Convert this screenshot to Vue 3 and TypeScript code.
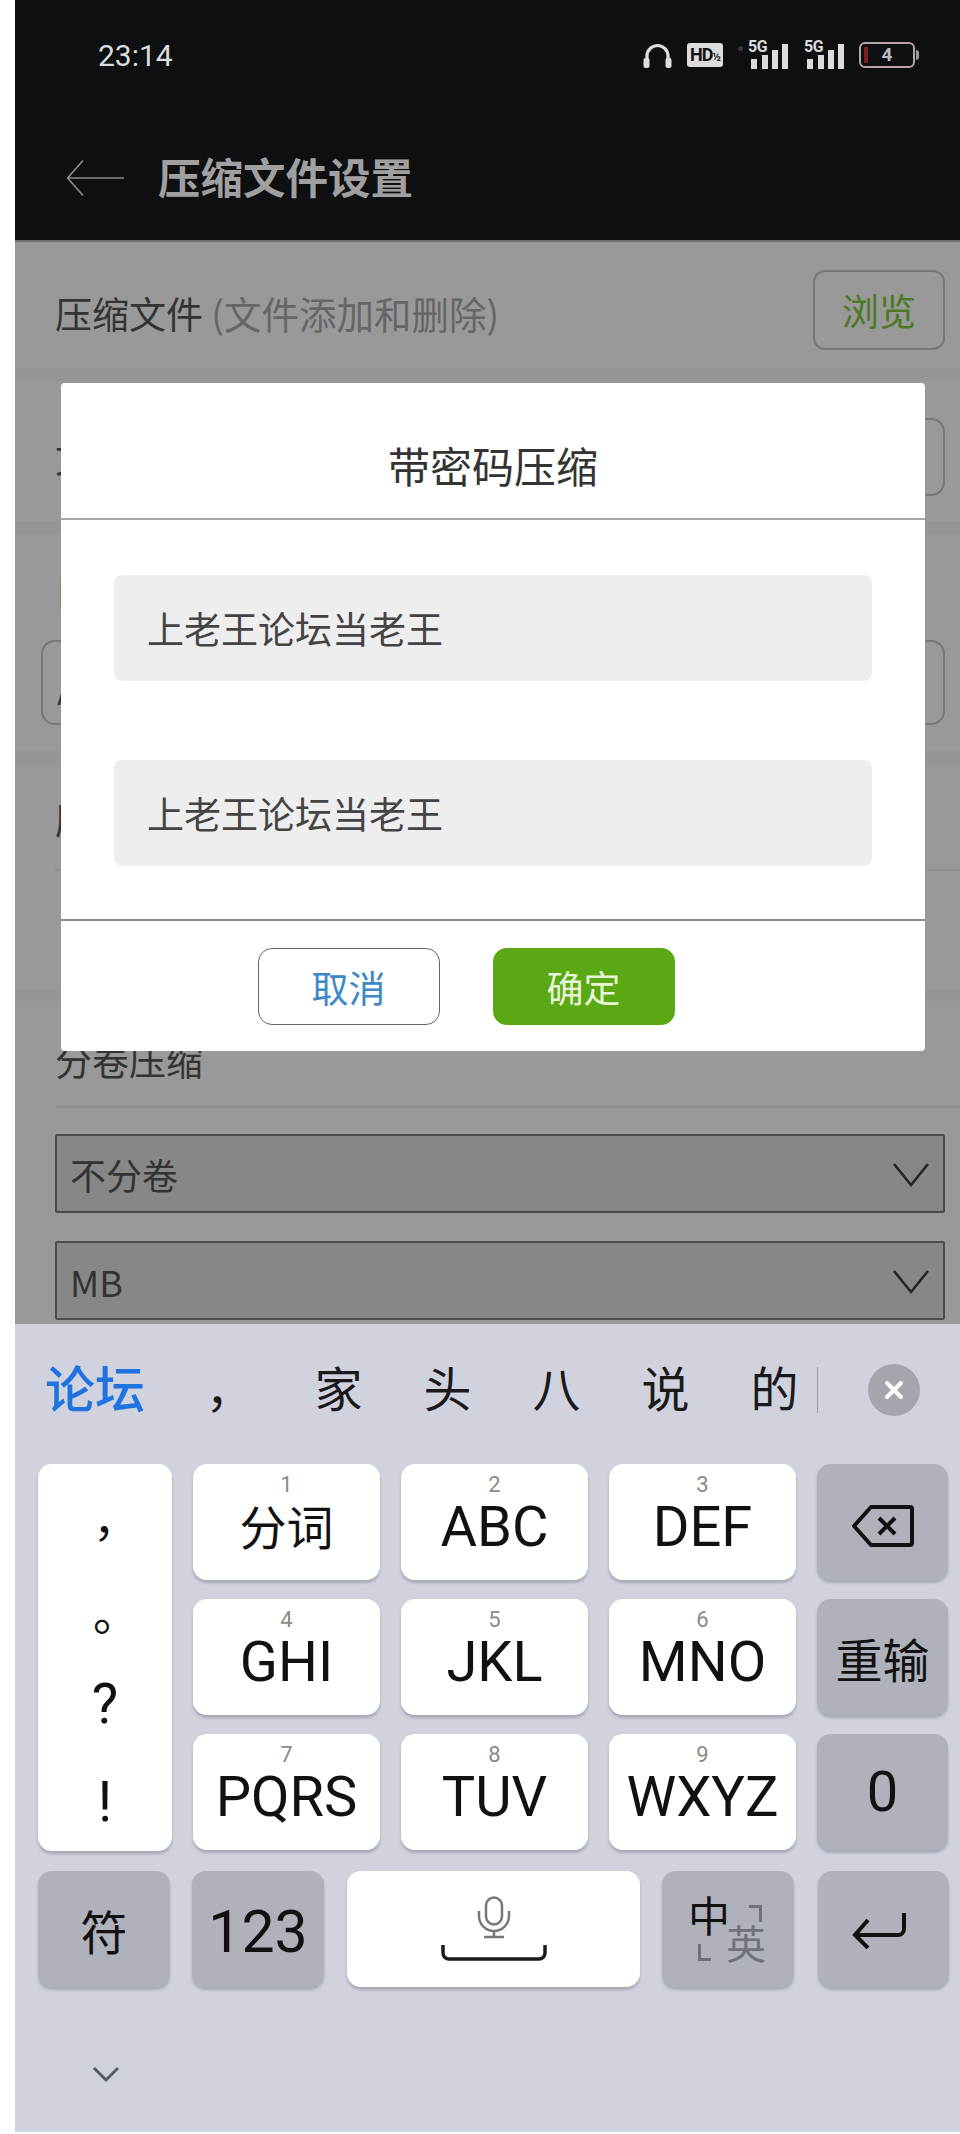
<template>
  <div class="screen">
    <header class="topbar">
      <div class="statusbar">
        <span class="time">23:14</span>
        <div class="status-icons">
          <svg class="ic-head" width="29" height="26" viewBox="0 0 29 26">
            <path d="M4 22V14a10.500 10.500 0 0 1 21 0v8" fill="none" stroke="#dedede" stroke-width="3.200" />
            <rect x="0.500" y="16" width="6" height="10" rx="2" fill="#dedede" />
            <rect x="22.500" y="16" width="6" height="10" rx="2" fill="#dedede" />
          </svg>
          <span class="hd">HD<small>½</small></span>
          <span class="dot"></span>
          <div class="signal" v-for="n in 2" :key="n">
            <span class="five-g">5G</span>
            <svg width="38" height="26" viewBox="0 0 38 26">
              <rect x="0" y="16" width="6" height="10" fill="#dcdcdc" />
              <rect x="11" y="12" width="6" height="14" fill="#dcdcdc" />
              <rect x="21" y="7" width="6" height="19" fill="#dcdcdc" />
              <rect x="31" y="1" width="6" height="25" fill="#dcdcdc" />
            </svg>
          </div>
          <div class="battery">
            <i class="battery-low"></i>
            <span>4</span>
          </div>
        </div>
      </div>
      <div class="titlebar">
        <svg class="back" width="60" height="38" viewBox="0 0 60 38">
          <path d="M17 1.500 1.500 19 17 36.500M2 19h56" fill="none" stroke="#8c8c8c" stroke-width="1.600" />
        </svg>
        <h1>压缩文件设置</h1>
      </div>
    </header>

    <main class="settings">
      <section class="row row-files">
        <span class="label">压缩文件 <em>(文件添加和删除)</em></span>
        <button class="browse">浏览</button>
      </section>
      <section class="row row-name">
        <span class="label">文件名</span>
        <div class="field"></div>
      </section>
      <section class="row row-path">
        <span class="label">目标路径</span>
        <div class="field wide">/storage</div>
      </section>
      <section class="row row-mode">
        <span class="label">压缩方式</span>
        <div class="rule"></div>
      </section>
      <section class="row row-volume">
        <span class="label">分卷压缩</span>
        <div class="rule"></div>
        <div class="select" v-for="opt in volumeOptions" :key="opt">
          <span>{{ opt }}</span>
          <svg width="38" height="38" viewBox="0 0 38 38">
            <path d="M2 9 19 30 36 9" fill="none" stroke="#262626" stroke-width="2.600" />
          </svg>
        </div>
      </section>
    </main>

    <section class="keyboard">
      <div class="candidates">
        <span class="cand-active">论坛</span>
        <div class="cand-list">
          <span v-for="c in candidates" :key="c">{{ c }}</span>
        </div>
        <i class="cand-sep"></i>
        <span class="cand-close">
          <svg width="24" height="24" viewBox="0 0 24 24">
            <path d="M5 5 19 19M19 5 5 19" stroke="#fff" stroke-width="4" stroke-linecap="round" />
          </svg>
        </span>
      </div>

      <div class="keys">
        <div class="punct">
          <span class="wide-mark">，</span>
          <span class="wide-mark">。</span>
          <span>?</span>
          <span>!</span>
        </div>
        <div class="t9">
          <div class="key" v-for="k in t9Keys" :key="k.num">
            <small>{{ k.num }}</small>
            <span :class="{ cjk: k.num === 1 }">{{ k.text }}</span>
          </div>
        </div>
        <div class="side">
          <div class="key dark">
            <svg class="backspace" width="64" height="46" viewBox="0 0 64 46">
              <path d="M20 4h39a2 2 0 0 1 2 2v34a2 2 0 0 1-2 2H20L3 23Z" fill="none" stroke="#111" stroke-width="4" stroke-linejoin="round" />
              <path d="M28 15 44 31M44 15 28 31" stroke="#111" stroke-width="4" />
            </svg>
          </div>
          <div class="key dark"><span class="cjk">重输</span></div>
          <div class="key dark"><span>0</span></div>
        </div>
      </div>

      <div class="bottom-row">
        <div class="key dark narrow"><span class="cjk">符</span></div>
        <div class="key dark narrow"><span class="num">123</span></div>
        <div class="key space">
          <svg width="106" height="66" viewBox="0 0 106 66">
            <rect x="45" y="1.500" width="16" height="27" rx="8" fill="none" stroke="#777" stroke-width="2.500" />
            <path d="M38 15v5a15 15 0 0 0 30 0v-5M53 35v6M43 41h20" fill="none" stroke="#777" stroke-width="2.500" />
            <path d="M2 49v8a6 6 0 0 0 6 6h90a6 6 0 0 0 6-6v-8" fill="none" stroke="#1a1a1a" stroke-width="3.500" />
          </svg>
        </div>
        <div class="key dark narrow lang">
          <span class="zh">中</span>
          <span class="en">英</span>
          <i class="corner tr"></i>
          <i class="corner bl"></i>
        </div>
        <div class="key dark narrow">
          <svg class="enter" width="54" height="38" viewBox="0 0 54 38">
            <path d="M52 2v16a6 6 0 0 1-6 6H4M16 9 3 24l13 13" fill="none" stroke="#111" stroke-width="4" />
          </svg>
        </div>
      </div>

      <svg class="collapse" width="28" height="18" viewBox="0 0 28 18">
        <path d="M2 3 14 15 26 3" fill="none" stroke="#555c66" stroke-width="3" />
      </svg>
    </section>

    <!-- 弹窗 -->
    <div class="dialog">
      <h2>带密码压缩</h2>
      <div class="dialog-body">
        <div class="pwd" v-for="n in 2" :key="n">{{ password }}</div>
      </div>
      <div class="dialog-foot">
        <button class="btn cancel">取消</button>
        <button class="btn ok">确定</button>
      </div>
    </div>
  </div>
</template>

<script setup lang="ts">
interface T9Key {
  num: number
  text: string
}

const password = "上老王论坛当老王"
const volumeOptions = ["不分卷", "MB"]
const candidates = ["，", "家", "头", "八", "说", "的"]
const t9Keys: T9Key[] = [
  { num: 1, text: "分词" },
  { num: 2, text: "ABC" },
  { num: 3, text: "DEF" },
  { num: 4, text: "GHI" },
  { num: 5, text: "JKL" },
  { num: 6, text: "MNO" },
  { num: 7, text: "PQRS" },
  { num: 8, text: "TUV" },
  { num: 9, text: "WXYZ" },
]
</script>

<style>
html,
body {
  margin: 0;
  background: #fff;
}
</style>

<style scoped>
.screen {
  position: relative;
  width: 945px;
  height: 2132px;
  margin-left: 15px;
  overflow: hidden;
  display: flex;
  flex-direction: column;
  font-family: "Noto Sans CJK SC", "Noto Sans", sans-serif;
}

/* 顶部 */
.topbar {
  height: 242px;
  flex: none;
  background: #0d0f10;
  border-bottom: 2px solid #6e6e6e;
  box-sizing: border-box;
}
.statusbar {
  height: 110px;
  display: flex;
  align-items: center;
  justify-content: space-between;
  padding: 0 45px 0 83px;
  box-sizing: border-box;
}
.time {
  font: 30px Roboto, sans-serif;
  color: #dcdcdc;
}
.status-icons {
  display: flex;
  align-items: center;
}
.hd {
  width: 36px;
  height: 24px;
  margin-left: 15px;
  background: #dcdcdc;
  color: #111;
  border-radius: 3px;
  font: bold 18px/24px Roboto, sans-serif;
  letter-spacing: -1px;
  text-align: center;
  white-space: nowrap;
  overflow: hidden;
}
.hd small {
  font-size: 11px;
}
.dot {
  width: 5px;
  height: 5px;
  margin: 0 -1px 14px 15px;
  border-radius: 50%;
  background: #3b3b3b;
}
.signal {
  position: relative;
  height: 27px;
  margin: 0 9px;
  display: flex;
  align-items: flex-end;
}
.five-g {
  position: absolute;
  left: -3px;
  top: -3px;
  font: bold 16px/15px Roboto, sans-serif;
  color: #dcdcdc;
  letter-spacing: -0.5px;
  background: #0d0f10;
  padding-right: 1px;
}
.battery {
  position: relative;
  width: 56px;
  height: 26px;
  margin-left: 5px;
  box-sizing: border-box;
  border: 2px solid #b5a6a6;
  border-radius: 6px;
  text-align: center;
  font: bold 19px/22px Roboto, sans-serif;
  color: #bdbdbd;
}
.battery::after {
  content: "";
  position: absolute;
  right: -6px;
  top: 6px;
  width: 3px;
  height: 10px;
  background: #9a9a9a;
  border-radius: 0 3px 3px 0;
}
.battery-low {
  position: absolute;
  left: 3px;
  top: 3px;
  width: 4px;
  height: 16px;
  background: #7d1d22;
}
.titlebar {
  display: flex;
  align-items: center;
  height: 136px;
  padding-left: 51px;
}
.titlebar h1 {
  margin: 0 0 5px 32px;
  font-size: 42.500px;
  font-weight: 700;
  color: #a0a0a0;
}

/* 被遮住的设置页 */
.settings {
  flex: none;
  height: 1082px;
  background: #999;
  color: #333;
  font-size: 37px;
  display: flex;
  flex-direction: column;
}
.row {
  box-sizing: border-box;
  padding: 0 15px 0 40px;
  border-bottom: 13px solid #959595;
}
.row-files {
  height: 139px;
  display: flex;
  align-items: flex-start;
  justify-content: space-between;
  padding-top: 28px;
}
.label {
  line-height: 54px;
}
.row-files .label {
  margin-top: 16px;
}
.label em {
  font-style: normal;
  font-size: 37.500px;
  color: #666;
}
.browse {
  width: 132px;
  height: 80px;
  box-sizing: border-box;
  background: transparent;
  border: 2px solid #777;
  border-radius: 12px;
  color: #4c7a22;
  font: 37px "Noto Sans CJK SC", sans-serif;
}
.row-name {
  height: 153px;
  display: flex;
  align-items: center;
  justify-content: space-between;
  padding-top: 12px;
}
.field {
  width: 600px;
  height: 78px;
  box-sizing: border-box;
  border: 2px solid #777;
  border-radius: 14px;
}
.row-path {
  height: 230px;
  padding-top: 29px;
  padding-left: 26px;
  display: flex;
  flex-direction: column;
}
.row-path .label {
  padding-left: 14px;
}
.field.wide {
  width: 100%;
  height: 85px;
  margin-top: 23px;
  padding-left: 14px;
  line-height: 81px;
}
.row-mode {
  height: 238px;
  padding-top: 28px;
  padding-right: 0;
}
.row-mode .rule {
  margin-top: 23px;
}
.row-volume {
  flex: 1;
  padding-top: 31px;
  padding-right: 0;
  border-bottom: 0;
}
.rule {
  height: 2px;
  margin-top: 19px;
  background: #8d8d8d;
}
.select {
  height: 79px;
  margin: 26px 15px 0 0;
  box-sizing: border-box;
  border: 2px solid #4c4c4c;
  background: #878787;
  border-radius: 2px;
  padding: 0 13px;
  display: flex;
  align-items: center;
  justify-content: space-between;
  color: #333;
  font-size: 36px;
}
.select:last-child {
  margin-top: 28px;
}

/* 键盘 */
.keyboard {
  position: relative;
  flex: 1;
  background: #d0d3de;
  padding: 0 0 0 23px;
  box-sizing: border-box;
}
.candidates {
  height: 132px;
  margin-bottom: 8px;
  display: flex;
  align-items: center;
  padding-left: 7px;
  color: #1a1a1a;
}
.cand-active {
  font-size: 50px;
  font-weight: 500;
  color: #1f73e0;
  width: 98px;
  margin-bottom: 8px;
  white-space: nowrap;
}
.cand-list {
  display: flex;
  margin-left: 32px;
  margin-bottom: 8px;
}
.cand-list span {
  width: 109px;
  text-align: center;
  font-size: 48px;
}
.cand-sep {
  width: 1px;
  height: 46px;
  background: #9a9ca5;
  margin-left: -12px;
}
.cand-close {
  width: 52px;
  height: 52px;
  margin-left: 50px;
  border-radius: 50%;
  background: #a4a6ad;
  display: flex;
  align-items: center;
  justify-content: center;
}
.keys {
  display: flex;
}
.key {
  position: relative;
  display: flex;
  align-items: center;
  justify-content: center;
  background: #fff;
  border-radius: 14px;
  box-shadow: 0 3px 3px rgba(90, 95, 110, 0.35);
  color: #111;
  font: 56px Roboto, "Noto Sans CJK SC", sans-serif;
}
.key .cjk {
  font-size: 47px;
}
.key .num {
  font-size: 59px;
  margin-top: 4px;
}
.key.dark {
  background: #b0b2bb;
}
.punct {
  width: 134px;
  height: 387px;
  background: #fff;
  border-radius: 14px;
  box-shadow: 0 3px 3px rgba(90, 95, 110, 0.35);
  display: grid;
  grid-template-rows: 104px 84px 104px 92px;
  justify-items: center;
  align-items: center;
  font: 56px Roboto, "Noto Sans CJK SC", sans-serif;
  color: #111;
}
.punct .wide-mark {
  font-size: 46px;
  padding-left: 22px;
}
.t9 {
  width: 602px;
  margin-left: 21px;
  display: grid;
  grid-template-columns: repeat(3, 187px);
  grid-auto-rows: 116px;
  column-gap: 21px;
  row-gap: 19px;
}
.t9 .key small {
  position: absolute;
  top: 10px;
  left: 0;
  right: 0;
  text-align: center;
  font-size: 22px;
  line-height: 22px;
  color: #8a8a8a;
}
.t9 .key span {
  margin-top: 10px;
}
.t9 .key span.cjk {
  margin-top: 4px;
}
.side {
  width: 131px;
  margin-left: 22px;
  display: grid;
  grid-auto-rows: 116px;
  row-gap: 19px;
}
.backspace {
  margin-top: 8px;
}
.bottom-row {
  display: flex;
  margin-top: 20px;
  height: 116px;
}
.enter {
  margin-right: 10px;
  margin-top: 2px;
}
.narrow {
  width: 132px;
  margin-right: 22px;
}
.narrow + .narrow {
  margin-right: 23px;
}
.space {
  width: 293px;
  margin-right: 22px;
}
.narrow.lang {
  margin-right: 24px;
}
.bottom-row .narrow:last-child {
  width: 131px;
  margin-right: 0;
}
.lang .zh {
  position: absolute;
  left: 26px;
  top: 22px;
  font-size: 42px;
  line-height: 50px;
}
.lang .en {
  position: absolute;
  left: 64px;
  top: 50px;
  font-size: 40px;
  line-height: 50px;
  color: #70727a;
}
.corner {
  position: absolute;
  width: 10px;
  height: 14px;
  border: solid #70727a;
}
.corner.tr {
  right: 32px;
  top: 34px;
  border-width: 3px 3px 0 0;
}
.corner.bl {
  left: 36px;
  bottom: 26px;
  border-width: 0 0 3px 3px;
}
.collapse {
  display: block;
  margin: 78px 0 0 54px;
}

/* 弹窗 */
.dialog {
  position: absolute;
  left: 46px;
  top: 383px;
  width: 864px;
  height: 668px;
  background: #fff;
  border-radius: 4px;
  display: flex;
  flex-direction: column;
}
.dialog h2 {
  height: 137px;
  margin: 0;
  flex: none;
  box-sizing: border-box;
  border-bottom: 2px solid #a8a8a8;
  padding-top: 19px;
  font-size: 42px;
  font-weight: 400;
  line-height: 125px;
  text-align: center;
  color: #333;
}
.dialog-body {
  height: 401px;
  flex: none;
  box-sizing: border-box;
  padding: 55px 53px 0;
  border-bottom: 2px solid #8c8c8c;
  display: flex;
  flex-direction: column;
  gap: 79px;
}
.pwd {
  height: 106px;
  padding-left: 33px;
  background: #eee;
  border-radius: 8px;
  font-size: 37px;
  line-height: 106px;
  color: #444;
}
.dialog-foot {
  flex: 1;
  display: flex;
  justify-content: center;
  gap: 53px;
  padding: 27px 54px 0 0;
}
.btn {
  width: 182px;
  height: 77px;
  box-sizing: border-box;
  border-radius: 14px;
  font: 37px "Noto Sans CJK SC", sans-serif;
}
.cancel {
  background: #fff;
  border: 1.500px solid #666;
  color: #3c88c8;
}
.ok {
  background: #5aa814;
  border: 0;
  color: #e6f5d6;
}
</style>
